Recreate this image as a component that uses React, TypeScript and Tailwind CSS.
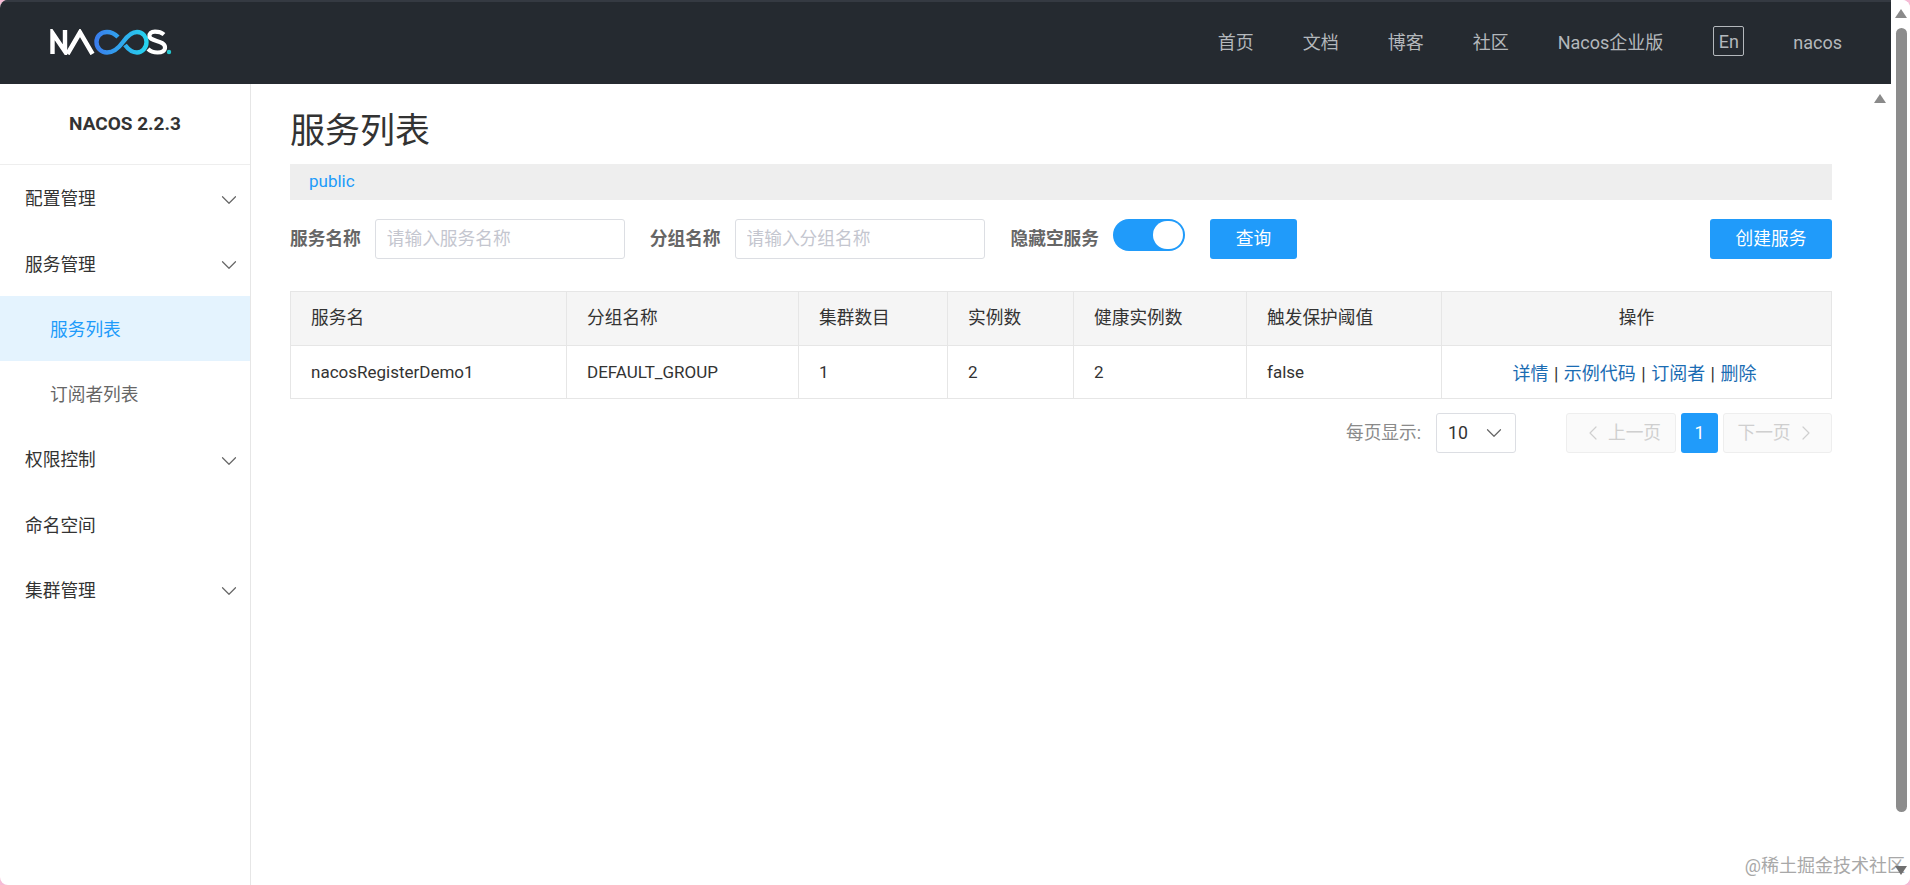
import { ChevronDown, ChevronLeft, ChevronRight } from "lucide-react";

const font = { fontFamily: 'Roboto, "Noto Sans CJK SC", sans-serif' };

function Logo() {
  return (
    <svg width="122" height="26" viewBox="0 0 122 26" fill="none" className="block">
      <defs>
        <linearGradient id="inf" x1="45" y1="0" x2="98" y2="0" gradientUnits="userSpaceOnUse">
          <stop offset="0" stopColor="#3a7bec" />
          <stop offset="1" stopColor="#25d5ee" />
        </linearGradient>
      </defs>
      <path d="M2.500 25V4L15 22.500V1" stroke="#fff" strokeWidth="4.400" />
      <path d="M17.500 25L30 3.500L42.500 25" stroke="#fff" strokeWidth="4.600" />
      <path
        d="M68 8C64 4 61 3 57 3C50 3 46.500 8 46.500 13C46.500 19 51 23.500 57 23.500C63 23.500 68 20 73 13C78 6 82 3 87 3C93 3 96.500 8 96.500 13C96.500 19 92 23.500 87 23.500C82 23.500 78 20 75 16"
        stroke="url(#inf)"
        strokeWidth="4.400"
      />
      <path d="M114 5.500C111 3 108 2.600 105 2.600C101 2.600 99 5 99.500 7.500C100.500 13 114.500 11 115 18C115.300 22 112 23.500 107.500 23.500C103.500 23.500 100.500 22.500 98 20" stroke="#fff" strokeWidth="4.200" />
      <circle cx="119" cy="23" r="2.200" fill="#22c7cf" />
    </svg>
  );
}

function TopNav() {
  return (
    <header className="h-[84px] shrink-0 bg-[#252a30] border-t-2 border-[#353a42] flex items-center pl-[50px] pr-[49px] pb-[2px] text-[#b4b8bc] text-[18px]">
      <Logo />
      <nav className="ml-auto flex items-center">
        <span>首页</span>
        <span className="ml-[49px]">文档</span>
        <span className="ml-[49px]">博客</span>
        <span className="ml-[49px]">社区</span>
        <span className="ml-[49px]">Nacos企业版</span>
        <span className="ml-[50px] h-[30px] w-[31px] border border-[#b4b8bc] rounded-[2px] flex items-center justify-center -mt-0.5">En</span>
        <span className="ml-[49px]">nacos</span>
      </nav>
    </header>
  );
}

function MenuItem({ label, arrow, sub, active }: { label: string; arrow?: boolean; sub?: boolean; active?: boolean }) {
  return (
    <div
      className={`h-[65.25px] flex items-center pt-[4px] pr-[8px] ${sub ? "pl-[50px]" : "pl-[25px]"} ${active ? "bg-[#e4f3fe] text-[#209bfa]" : sub ? "text-[#666]" : "text-[#333]"}`}
    >
      <span>{label}</span>
      {arrow && <ChevronDown size={26} strokeWidth={1.1} className="ml-auto text-[#666]" />}
    </div>
  );
}

function Sidebar() {
  return (
    <aside className="w-[251px] shrink-0 border-r border-[#e6e6e6] text-[17.7px]">
      <div className="h-[81px] border-b border-[#eeeeee] flex items-center justify-center font-bold text-[#333] text-[19px]">
        NACOS 2.2.3
      </div>
      <div>
        <MenuItem label="配置管理" arrow />
        <MenuItem label="服务管理" arrow />
        <MenuItem label="服务列表" sub active />
        <MenuItem label="订阅者列表" sub />
        <MenuItem label="权限控制" arrow />
        <MenuItem label="命名空间" />
        <MenuItem label="集群管理" arrow />
      </div>
    </aside>
  );
}

function Filters() {
  return (
    <div className="mt-[19px] flex items-start text-[17.7px]">
      <label className="h-10 leading-10 font-bold text-[#666]">服务名称</label>
      <input
        readOnly
        placeholder="请输入服务名称"
        className="ml-[14px] w-[250px] h-10 border border-[#dcdee3] rounded-[3px] px-[11px] outline-none placeholder:text-[#c4c6cf]"
      />
      <label className="ml-[25px] h-10 leading-10 font-bold text-[#666]">分组名称</label>
      <input
        readOnly
        placeholder="请输入分组名称"
        className="ml-[14px] w-[250px] h-10 border border-[#dcdee3] rounded-[3px] px-[11px] outline-none placeholder:text-[#c4c6cf]"
      />
      <label className="ml-[26px] h-10 leading-10 font-bold text-[#666]">隐藏空服务</label>
      <div className="ml-[14px] w-[72px] h-8 rounded-full bg-[#209bfa] relative">
        <span className="absolute right-[2px] top-[2px] w-[30px] h-7 rounded-full bg-white" />
      </div>
      <button className="ml-[25px] w-[87px] h-10 rounded-[3px] bg-[#209bfa] text-white">查询</button>
      <button className="ml-auto w-[122px] h-10 rounded-[3px] bg-[#209bfa] text-white">创建服务</button>
    </div>
  );
}

const headers = ["服务名", "分组名称", "集群数目", "实例数", "健康实例数", "触发保护阈值"];
const cells = ["nacosRegisterDemo1", "DEFAULT_GROUP", "1", "2", "2", "false"];
const widths = ["w-[276px]", "w-[232px]", "w-[149px]", "w-[126px]", "w-[173px]", "w-[195px]"];

function Sep() {
  return <span className="px-[1px]"> | </span>;
}

function ServiceTable() {
  return (
    <table className="mt-[32px] w-full table-fixed border-collapse text-[17.7px] text-[#333]">
      <colgroup>
        {widths.map((w) => (
          <col key={w} className={w} />
        ))}
        <col />
      </colgroup>
      <thead>
        <tr className="h-[54px] bg-[#f5f5f5]">
          {headers.map((h) => (
            <th key={h} className="border border-[#e6e6e6] pl-5 text-left font-normal">
              {h}
            </th>
          ))}
          <th className="border border-[#e6e6e6] text-center font-normal">操作</th>
        </tr>
      </thead>
      <tbody>
        <tr className="h-[53px]">
          {cells.map((c, i) => (
            <td key={i} className="border border-[#e6e6e6] pl-5 pt-[2px] text-[17px]">
              {c}
            </td>
          ))}
          <td className="border border-[#e6e6e6] text-center pt-[2px] pr-[4px] text-[18px]">
            <a className="text-[#1a6cb3]">详情</a>
            <Sep />
            <a className="text-[#1a6cb3]">示例代码</a>
            <Sep />
            <a className="text-[#1a6cb3]">订阅者</a>
            <Sep />
            <a className="text-[#1a6cb3]">删除</a>
          </td>
        </tr>
      </tbody>
    </table>
  );
}

function Pagination() {
  return (
    <div className="mt-[14px] flex items-center justify-end text-[17.7px]">
      <span className="text-[#8a8a8a]">每页显示:</span>
      <div className="ml-[15px] w-[80px] h-10 border border-[#dcdee3] rounded-[3px] flex items-center pl-[11px] pr-[8px] text-[#333]">
        <span>10</span>
        <ChevronDown size={26} strokeWidth={1.1} className="ml-auto text-[#666]" />
      </div>
      <div className="ml-[50px] w-[110px] h-10 border border-[#eeeeee] bg-[#fafafa] rounded-[3px] flex items-center justify-center text-[#cfcfcf]">
        <ChevronLeft size={24} strokeWidth={1.2} />
        <span className="ml-[3px]">上一页</span>
      </div>
      <div className="ml-[5px] w-[37px] h-10 rounded-[3px] bg-[#209bfa] text-white flex items-center justify-center">1</div>
      <div className="ml-[5px] w-[109px] h-10 border border-[#eeeeee] bg-[#fafafa] rounded-[3px] flex items-center justify-center text-[#cfcfcf]">
        <span className="mr-[3px]">下一页</span>
        <ChevronRight size={24} strokeWidth={1.2} />
      </div>
    </div>
  );
}

function Scrollbar() {
  return (
    <div className="w-[19px] shrink-0 bg-white flex flex-col items-center pt-[9px] pl-[1px]">
      <span className="w-0 h-0 border-x-[6px] border-x-transparent border-b-[9px] border-b-[#8a8a8a]" />
      <span className="mt-[10px] w-[11px] h-[784px] rounded-full bg-[#8c8c8c]" />
      <span className="relative z-10 mt-[54px] w-0 h-0 border-x-[6px] border-x-transparent border-t-[9px] border-t-[#707070]" />
    </div>
  );
}

export default function App() {
  return (
    <div className="h-[885px] w-[1910px] overflow-hidden bg-[#f6bcd6]" style={font}>
      <div className="relative h-full w-full rounded-[8px] overflow-hidden bg-white flex">
        <div className="w-[1891px] shrink-0 flex flex-col">
          <TopNav />
          <div className="flex flex-1 min-h-0">
            <Sidebar />
            <main className="relative flex-1 pl-[39px] pr-[59px] pt-[22px]">
              <span className="absolute right-[5px] top-[10px] w-0 h-0 border-x-[6px] border-x-transparent border-b-[9px] border-b-[#8a8a8a]" />
              <h1 className="text-[35px] leading-[52px] text-[#333]">服务列表</h1>
              <div className="mt-[6px] h-[36px] bg-[#eeeeee] pl-[19px] flex items-center text-[17px] text-[#209bfa]">public</div>
              <Filters />
              <ServiceTable />
              <Pagination />
            </main>
          </div>
        </div>
        <Scrollbar />
        <span className="absolute right-[5px] bottom-[6px] z-0 bg-white/80 text-[18px] text-[#a8a8a8]">@稀土掘金技术社区</span>
      </div>
    </div>
  );
}
